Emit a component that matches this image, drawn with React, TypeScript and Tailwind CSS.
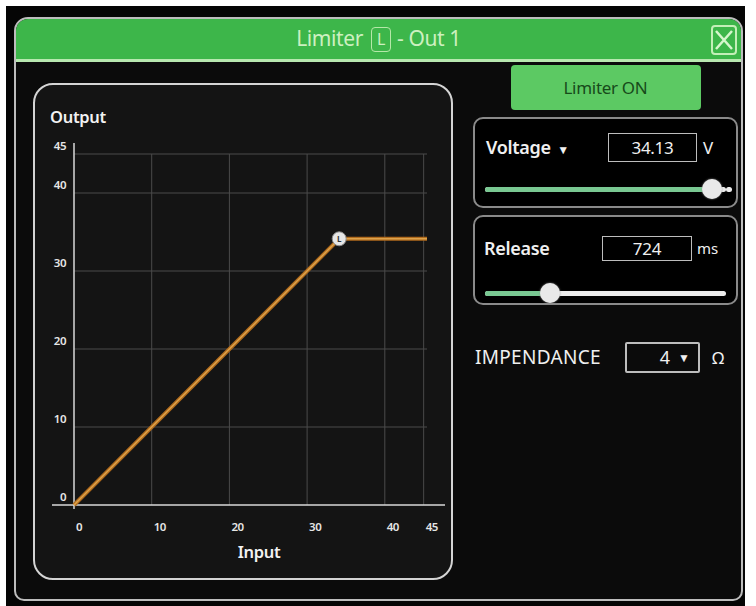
import { FC } from 'react';

const FONT = { fontFamily: '"Noto Sans", "Open Sans", sans-serif' };

const xs = (v: number) => 39 + v * 7.77;
const ys = (v: number) => 420 - v * 7.8;
const ticks = [0, 10, 20, 30, 40, 45];

const Chart: FC = () => {
  const kx = xs(34.13);
  const ky = ys(34.13);
  return (
    <svg width="420" height="497" viewBox="0 0 420 497" className="block">
      <text x="15" y="38" fill="#f2f2f2" fontSize="16.5" fontWeight="600" letterSpacing="-0.3">
        Output
      </text>
      {ticks.slice(1).map((t) => (
        <line key={'v' + t} x1={xs(t)} y1={ys(45)} x2={xs(t)} y2={420} stroke="#4a4a4a" strokeWidth="1" />
      ))}
      {ticks.slice(1).map((t) => (
        <line key={'h' + t} x1={xs(0)} y1={ys(t)} x2={392} y2={ys(t)} stroke="#4a4a4a" strokeWidth="1" />
      ))}
      <line x1={39} y1={58} x2={39} y2={424} stroke="#d8d8d8" strokeWidth="1.5" />
      <line x1={17} y1={420} x2={410} y2={420} stroke="#d8d8d8" strokeWidth="1.5" />
      {ticks.map((t) => (
        <text key={'yl' + t} x={31} y={ys(t) - 4} fill="#e6e6e6" fontSize="11.5" fontWeight="600" textAnchor="end" letterSpacing="-0.5">
          {t}
        </text>
      ))}
      {ticks.map((t) => (
        <text key={'xl' + t} x={xs(t) + 2} y={446} fill="#e6e6e6" fontSize="11.5" fontWeight="600" letterSpacing="-0.5">
          {t}
        </text>
      ))}
      <text x="224" y="473" fill="#f2f2f2" fontSize="16.5" fontWeight="600" textAnchor="middle" letterSpacing="-0.3">
        Input
      </text>
      <polyline points={`${xs(0)},420 ${kx},${ky} 392,${ky}`} fill="none" stroke="#b06a1c" strokeWidth="4" />
      <polyline points={`${xs(0)},420 ${kx},${ky} 392,${ky}`} fill="none" stroke="#dca24c" strokeWidth="1.5" />
      <circle cx={kx} cy={ky} r="7" fill="#e6e6e6" stroke="#8a8a8a" strokeWidth="1" />
      <text x={kx} y={ky + 3} fill="#333" fontSize="8" fontWeight="700" textAnchor="middle">
        L
      </text>
    </svg>
  );
};

const Slider: FC<{ pct: number; tail?: boolean }> = ({ pct, tail }) => (
  <div className="relative h-[20px] mx-[10px]">
    <div className="absolute left-0 right-0 top-[8px] h-[5px] rounded-full bg-[#ececec]" />
    <div className="absolute left-0 top-[8px] h-[5px] rounded-full bg-[#79c892]" style={{ width: `${pct}%` }} />
    <div
      className="absolute top-0 w-[20px] h-[20px] -ml-[10px] rounded-full bg-[#e9e9e9] shadow-[0_0_2px_#999]"
      style={{ left: `${pct}%` }}
    />
    {tail && <div className="absolute right-[-6px] top-[8px] w-[6px] h-[5px] rounded-full bg-[#ececec]" />}
  </div>
);

const App: FC = () => {
  return (
    <div className="w-[756px] h-[606px] bg-white pt-[6px] pl-[6px]" style={FONT}>
      <div className="w-[739px] h-[600px] bg-[#050505] pt-[11px] pl-[8px]">
        <div className="w-[729px] h-[584px] rounded-t-[14px] rounded-b-[10px] border-2 border-[#bdbdbd] bg-[#0b0b0b] overflow-hidden flex flex-col">
          <div className="h-[43px] bg-[#3db64a] border-b-[3px] border-[#b8e8b0] relative flex items-center justify-center shrink-0">
            <div className="flex items-center text-[21px] text-[#cdf0c0] tracking-[-0.4px]">
              <span>Limiter</span>
              <span className="ml-[8px] w-[20px] h-[25px] border-[1.5px] border-[#b5e8a8] rounded-[4px] flex items-center justify-center text-[16px] leading-none">
                L
              </span>
              <span className="ml-[6px]">- Out 1</span>
            </div>
            <svg className="absolute right-[4px] top-[6px]" width="26" height="30" viewBox="0 0 26 30">
              <rect x="1" y="1" width="24" height="28" rx="3" fill="none" stroke="#c4efb8" strokeWidth="2" />
              <path d="M5 6 L21 24 M21 6 L5 24" stroke="#d6f6cc" strokeWidth="2.5" />
            </svg>
          </div>
          <div className="flex pl-[17px] pt-[3px]">
            <div className="mt-[18px] w-[420px] h-[497px] rounded-[20px] border-2 border-[#d4d4d4] bg-[#141414] overflow-hidden">
              <Chart />
            </div>
            <div className="ml-[20px] w-[265px] flex flex-col">
              <div className="mx-auto w-[190px] h-[45px] rounded-[4px] bg-[#5cc963] flex items-center justify-center text-[17px] text-[#174a1a] tracking-[-0.3px]">
                Limiter ON
              </div>
              <div className="mt-[7px] h-[91px] rounded-[10px] border-2 border-[#8a8a8a] bg-black">
                <div className="flex items-center pt-[14px] pl-[11px]">
                  <span className="w-[122px] text-[18px] font-semibold text-[#f0f0f0] tracking-[-0.3px]">
                    Voltage <span className="ml-[2px] text-[12px]">▼</span>
                  </span>
                  <div className="w-[89px] h-[29px] border-[1.5px] border-[#bdbdbd] flex items-center justify-center text-[17px] text-[#f0f0f0] tracking-[-0.3px]">
                    34.13
                  </div>
                  <span className="ml-[6px] text-[17px] text-[#f0f0f0]">V</span>
                </div>
                <div className="mt-[17px]">
                  <Slider pct={94} tail />
                </div>
              </div>
              <div className="mt-[7px] h-[90px] rounded-[10px] border-2 border-[#8a8a8a] bg-black">
                <div className="flex items-center pt-[18px] pl-[9px]">
                  <span className="w-[118px] text-[18px] font-semibold text-[#f0f0f0] tracking-[-0.3px]">Release</span>
                  <div className="w-[90px] h-[25px] border-[1.5px] border-[#bdbdbd] flex items-center justify-center text-[17px] text-[#f0f0f0] tracking-[-0.3px]">
                    724
                  </div>
                  <span className="ml-[5px] text-[15px] text-[#f0f0f0]">ms</span>
                </div>
                <div className="mt-[21px]">
                  <Slider pct={27} />
                </div>
              </div>
              <div className="mt-[37px] flex items-center pl-[2px]">
                <span className="w-[150px] text-[19px] text-[#f0f0f0] tracking-[0.3px]">IMPENDANCE</span>
                <div className="w-[75px] h-[31px] border-2 border-[#bdbdbd] rounded-[2px] flex items-center justify-end pr-[8px] text-[18px] text-[#f0f0f0]">
                  4 <span className="ml-[8px] text-[12px]">▼</span>
                </div>
                <span className="ml-[12px] text-[17px] text-[#f0f0f0]">Ω</span>
              </div>
            </div>
          </div>
        </div>
      </div>
    </div>
  );
};

export default App;
